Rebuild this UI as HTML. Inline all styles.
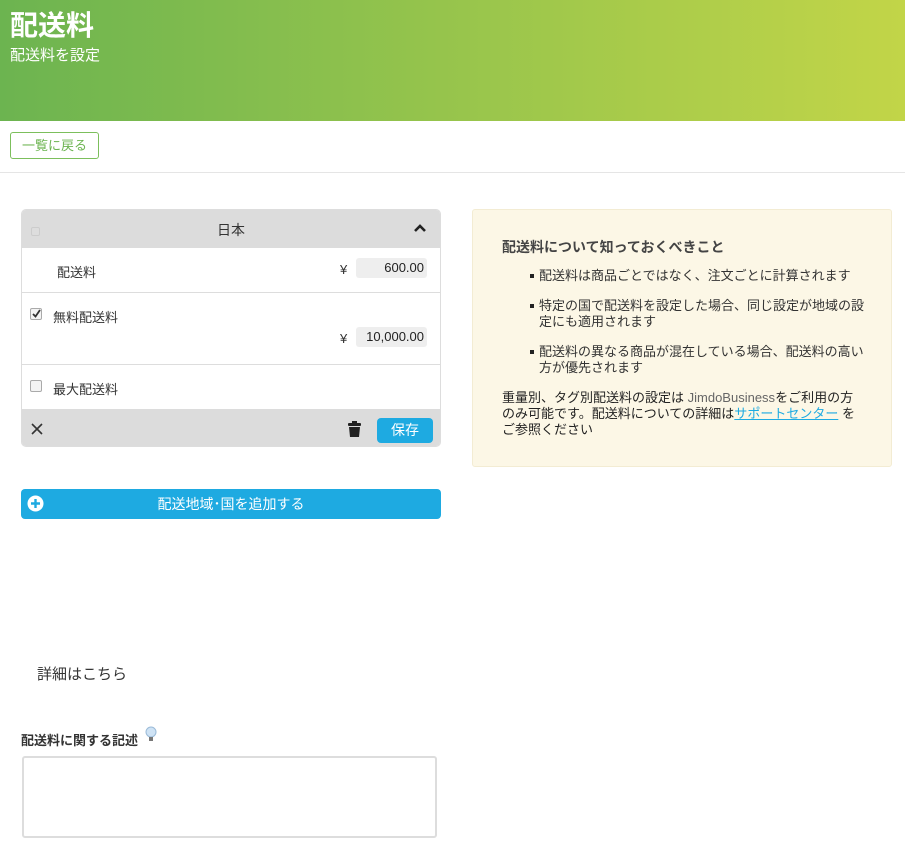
<!DOCTYPE html>
<html><head><meta charset="utf-8"><style>
*{box-sizing:border-box;margin:0;padding:0}
body{width:905px;height:848px;position:relative;background:#fff;font-family:"Liberation Sans","Noto Sans CJK JP",sans-serif;color:#333;font-size:13px;overflow:hidden}
.a{position:absolute}
.hdr{left:0;top:0;width:905px;height:121px;background:linear-gradient(90deg,#6cb450,#c2d548)}
.back{left:10px;top:132px;width:89px;height:27px;border:1px solid #7cbf5c;border-radius:3px;color:#6cb450;font-size:13px;text-align:center;line-height:25px}
.card{left:21px;top:209px;width:420px;height:238px;border-radius:5px;overflow:hidden;background:#fff;border:1px solid #ddd}
.row{position:absolute;left:0;width:100%;border-bottom:1px solid #ddd}
.inp{position:absolute;background:#eee;border-radius:3px;height:20px;text-align:right;padding-right:3px;line-height:20px;color:#222}
.cb{position:absolute;width:12px;height:12px;border:1px solid #aaa;border-radius:2px;background:#f4f4f4}
.info{left:472px;top:209px;width:420px;height:258px;background:#fcf7e6;border:1px solid #f3ecd3;border-radius:3px}
.info li{list-style:none;position:relative;padding-left:66px;padding-right:20px;line-height:16px;margin-bottom:14px}
.info li:before{content:"";position:absolute;left:57px;top:6px;width:4px;height:4px;background:#222}
</style></head><body>
<div class="a hdr"></div>
<div class="a" style="left:10px;top:4px;color:#fff;font-size:28px;font-weight:bold">配送料</div>
<div class="a" style="left:10px;top:44px;color:#fff;font-size:15px">配送料を設定</div>
<div class="a back">一覧に戻る</div>
<div class="a" style="left:0;top:172px;width:905px;height:1px;background:#e5e5e5"></div>

<div class="a card">
 <div class="row" style="top:0;height:38px;background:#dcdcdc;border:none">
  <div class="cb" style="left:9px;top:17px;width:9px;height:9px;border-color:#ccc;background:#ddd"></div>
  <div class="a" style="left:0;width:100%;top:10px;text-align:center;font-size:14px;color:#333">日本</div>
  <svg class="a" style="left:391px;top:13px" width="14" height="10" viewBox="0 0 14 10"><path d="M2 8 L7 3 L12 8" stroke="#222" stroke-width="2.6" fill="none"/></svg>
 </div>
 <div class="row" style="top:38px;height:45px">
  <div class="a" style="left:35px;top:14px">配送料</div>
  <div class="a" style="left:318px;top:14px">¥</div>
  <div class="inp" style="left:334px;top:10px;width:71px">600.00</div>
 </div>
 <div class="row" style="top:83px;height:72px">
  <div class="cb" style="left:8px;top:15px"></div>
  <svg class="a" style="left:9px;top:15px" width="11" height="11" viewBox="0 0 11 11"><path d="M2 6 L4.5 8.5 L9 2" stroke="#333" stroke-width="1.8" fill="none"/></svg>
  <div class="a" style="left:31px;top:14px">無料配送料</div>
  <div class="a" style="left:318px;top:38px">¥</div>
  <div class="inp" style="left:334px;top:34px;width:71px">10,000.00</div>
 </div>
 <div class="row" style="top:155px;height:44px;border:none">
  <div class="cb" style="left:8px;top:15px"></div>
  <div class="a" style="left:31px;top:14px">最大配送料</div>
 </div>
 <div class="row" style="top:199px;height:39px;background:#dcdcdc;border:none">
  <svg class="a" style="left:9px;top:14px" width="12" height="12" viewBox="0 0 12 12"><path d="M1 1 L11 11 M11 1 L1 11" stroke="#333" stroke-width="1.6"/></svg>
  <svg class="a" style="left:326px;top:12px" width="13" height="16" viewBox="0 0 13 16"><rect x="4" y="0" width="5" height="2" fill="#222"/><rect x="0" y="2" width="13" height="3" rx="1" fill="#222"/><path d="M1 6 H12 L11 16 H2 Z" fill="#222"/></svg>
  <div class="a" style="left:355px;top:9px;width:56px;height:25px;background:#1eaae1;border-radius:4px;color:#fff;text-align:center;line-height:25px;font-size:14px">保存</div>
 </div>
</div>

<div class="a" style="left:21px;top:489px;width:420px;height:30px;background:#1eaae1;border-radius:4px;color:#fff;text-align:center;line-height:30px;font-size:14px">配送地域･国を追加する</div>
<svg class="a" style="left:27px;top:495px" width="17" height="17" viewBox="0 0 17 17"><circle cx="8.5" cy="8.5" r="8" fill="#fff"/><path d="M8.5 4 V13 M4 8.5 H13" stroke="#1eaae1" stroke-width="2.4"/></svg>

<div class="a info">
 <div style="position:absolute;left:29px;top:27px;font-weight:bold;font-size:14px;color:#444">配送料について知っておくべきこと</div>
 <ul style="position:absolute;top:58px;left:0;width:100%">
  <li>配送料は商品ごとではなく、注文ごとに計算されます</li>
  <li style="padding-left:66px;text-indent:0">特定の国で配送料を設定した場合、同じ設定が地域の設定にも適用されます</li>
  <li>配送料の異なる商品が混在している場合、配送料の高い方が優先されます</li>
 </ul>
 <div style="position:absolute;left:29px;top:180px;width:360px;line-height:16px;color:#222">重量別、タグ別配送料の設定は <span style="color:#666">JimdoBusiness</span>をご利用の方のみ可能です。配送料についての詳細は<span style="color:#1eaae1;text-decoration:underline">サポートセンター</span> をご参照ください</div>
</div>

<div class="a" style="left:37px;top:663px;font-size:15px;color:#333">詳細はこちら</div>
<div class="a" style="left:21px;top:730px;font-weight:bold;font-size:13px;color:#333">配送料に関する記述</div>
<svg class="a" style="left:145px;top:726px" width="12" height="17" viewBox="0 0 12 17"><circle cx="6" cy="6" r="5" fill="#cfe3f5" stroke="#9bbbd8"/><rect x="4" y="11" width="4" height="4" fill="#777"/></svg>
<div class="a" style="left:22px;top:756px;width:415px;height:82px;border:2px solid #ddd;border-radius:3px"></div>
</body></html>
